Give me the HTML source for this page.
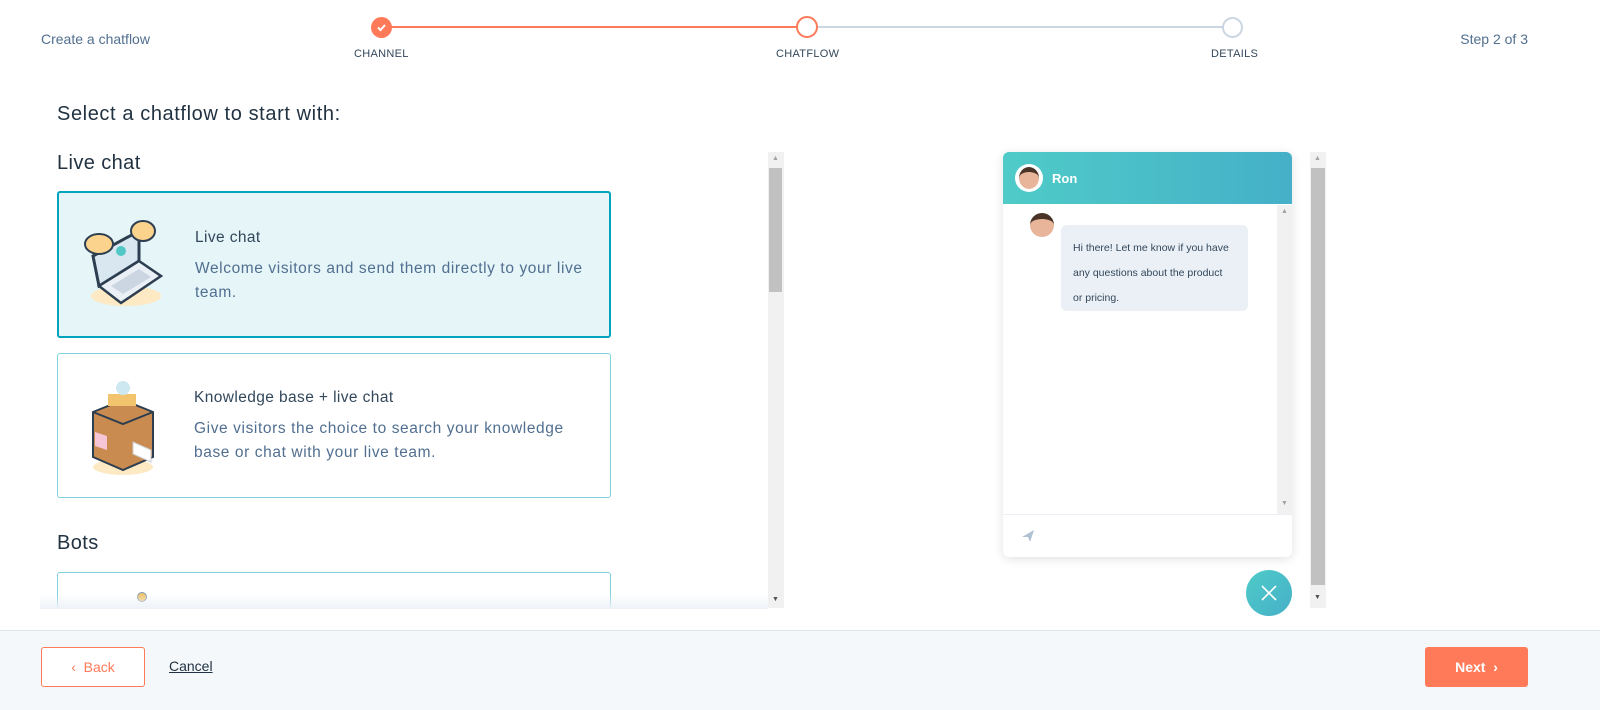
<!DOCTYPE html>
<html><head><style>
*{box-sizing:border-box;margin:0;padding:0}
body{width:1600px;height:710px;overflow:hidden;background:#fff;font-family:"Liberation Sans",sans-serif;color:#33475b;position:relative}
.a{position:absolute}
.lbl{font-size:11px;color:#33475b;letter-spacing:.3px}
.card{position:absolute;left:57px;width:554px;border-radius:3px}
.t{font-size:15.5px;color:#33475b;position:absolute;left:136px;letter-spacing:.4px}
.d{font-size:15.5px;color:#516f90;position:absolute;left:136px;width:400px;line-height:24px;letter-spacing:.6px}
</style></head><body>
<div class="a" style="left:41px;top:31px;font-size:14px;color:#516f90">Create a chatflow</div>
<div class="a" style="right:72px;top:31px;font-size:14px;color:#516f90">Step 2 of 3</div>
<div class="a" style="left:381px;top:26px;width:426px;height:2px;background:#ff7a59"></div>
<div class="a" style="left:807px;top:26px;width:425px;height:2px;background:#cbd6e2"></div>
<div class="a" style="left:371px;top:17px;width:21px;height:21px;border-radius:50%;background:#ff7a59"></div>
<svg class="a" style="left:375px;top:21px" width="13" height="13" viewBox="0 0 13 13"><path d="M3 6.5l2.5 2.5 4.5-5" stroke="#fff" stroke-width="2" fill="none"/></svg>
<div class="a" style="left:796px;top:16px;width:22px;height:22px;border-radius:50%;background:#fff;border:2px solid #ff7a59"></div>
<div class="a" style="left:1222px;top:17px;width:21px;height:21px;border-radius:50%;background:#fff;border:2px solid #cbd6e2"></div>
<div class="a lbl" style="left:354px;top:48px">CHANNEL</div>
<div class="a lbl" style="left:776px;top:48px">CHATFLOW</div>
<div class="a lbl" style="left:1211px;top:48px">DETAILS</div>

<div class="a" style="left:57px;top:103px;font-size:20px;letter-spacing:.6px;color:#213343">Select a chatflow to start with:</div>
<div class="a" style="left:57px;top:152px;font-size:20px;letter-spacing:.4px;color:#213343">Live chat</div>
<div class="card" style="top:191px;height:147px;background:#e5f5f8;border:2px solid #00a4bd">
<svg class="a" style="left:22px;top:18px" width="86" height="110" viewBox="0 0 86 110"><ellipse cx="45" cy="85" rx="35" ry="10" fill="#fdeac4"/><path d="M12 45 L58 20 L58 50 L18 75Z" fill="#d9e8f0" stroke="#2d3e50" stroke-width="3"/><path d="M18 75 L58 50 L80 65 L40 92Z" fill="#eaf0f6" stroke="#2d3e50" stroke-width="2.5"/><path d="M30 75 L58 58 L70 66 L42 83Z" fill="#cbd6e2"/><circle cx="40" cy="40" r="5" fill="#51c8c6"/><ellipse cx="18" cy="33" rx="14" ry="10" fill="#fbd38d" stroke="#2d3e50" stroke-width="2"/><ellipse cx="62" cy="20" rx="12" ry="10" fill="#fbd38d" stroke="#2d3e50" stroke-width="2"/></svg>
<div class="t" style="top:36px">Live chat</div>
<div class="d" style="top:64px">Welcome visitors and send them directly to your live team.</div>
</div>
<div class="card" style="top:353px;height:145px;background:#fff;border:1px solid #7fd1de">
<svg class="a" style="left:25px;top:18px" width="90" height="110" viewBox="0 0 90 110"><ellipse cx="40" cy="95" rx="30" ry="8" fill="#fdeac4"/><path d="M10 40 L40 28 L70 40 L70 85 L40 98 L10 85Z" fill="#c98b4f" stroke="#2d3e50" stroke-width="2"/><path d="M10 40 L40 52 L70 40" stroke="#2d3e50" stroke-width="2" fill="none"/><rect x="25" y="22" width="28" height="12" fill="#f2c46d"/><circle cx="40" cy="16" r="7" fill="#cde8f0"/><path d="M12 60l12 4v14l-12-4z" fill="#f7c6d6"/><path d="M50 70l18 8v12l-18-8z" fill="#fff" stroke="#ccc"/></svg>
<div class="t" style="top:35px">Knowledge base + live chat</div>
<div class="d" style="top:63px">Give visitors the choice to search your knowledge base or chat with your live team.</div>
</div>
<div class="a" style="left:57px;top:532px;font-size:20px;letter-spacing:.4px;color:#213343">Bots</div>
<div class="card" style="top:572px;height:60px;background:#fff;border:1px solid #7fd1de"></div>
<div class="a" style="left:137px;top:592px;width:10px;height:10px;border-radius:50%;background:#f2c46d;border:1px solid #7c98b6"></div>
<div class="a" style="left:40px;top:594px;width:728px;height:15px;background:linear-gradient(rgba(255,255,255,0),#eef2f7)"></div>
<div class="a" style="left:0;top:609px;width:1600px;height:21px;background:#fff"></div>
<div class="a" style="left:768px;top:152px;width:16px;height:456px;background:#f1f1f1"></div>
<div class="a" style="left:769px;top:168px;width:13px;height:124px;background:#c1c1c1"></div>
<div class="a" style="left:772px;top:155px;font-size:7px;color:#a3a3a3">▲</div>
<div class="a" style="left:772px;top:596px;font-size:7px;color:#505050">▼</div>

<div class="a" style="left:1003px;top:152px;width:289px;height:405px;background:#fff;border-radius:6px;box-shadow:0 2px 10px rgba(0,0,0,.12);overflow:hidden">
<div style="height:52px;background:linear-gradient(90deg,#4fcbc8,#45b0c8)"></div>
<div class="a" style="left:12px;top:12px;width:28px;height:28px;border-radius:50%;background:#fff"></div>
<div class="a" style="left:16px;top:15px;width:20px;height:22px;border-radius:50%;background:#e8b49a;border-top:5px solid #4a3428"></div>
<div class="a" style="left:49px;top:19px;color:#fff;font-weight:bold;font-size:13px">Ron</div>
<div class="a" style="left:274px;top:53px;width:15px;height:309px;background:#f1f1f1"></div>
<div class="a" style="left:278px;top:56px;font-size:7px;color:#a3a3a3">▲</div>
<div class="a" style="left:278px;top:348px;font-size:7px;color:#a3a3a3">▼</div>
<div class="a" style="left:27px;top:61px;width:24px;height:24px;border-radius:50%;background:#e8b49a;border-top:6px solid #4a3428"></div>
<div class="a" style="left:58px;top:73px;width:187px;height:86px;background:#eaf0f6;border-radius:6px;padding:11px 16px 0 12px;font-size:10.5px;line-height:25px;color:#33475b">Hi there! Let me know if you have any questions about the product or pricing.</div>
<div class="a" style="left:0;top:362px;width:289px;height:1px;background:#eaf0f6"></div>
<svg class="a" style="left:18px;top:377px" width="14" height="14" viewBox="0 0 14 14"><path d="M1 8L13 1 9 13 7 8z" fill="#b0c1d4"/></svg>
</div>
<div class="a" style="left:1246px;top:570px;width:46px;height:46px;border-radius:50%;background:linear-gradient(135deg,#4fcbc8,#45b0c8)"></div>
<svg class="a" style="left:1260px;top:584px" width="18" height="18" viewBox="0 0 18 18"><path d="M2 2L16 16M16 2L2 16" stroke="#fff" stroke-width="1.6"/></svg>
<div class="a" style="left:1310px;top:152px;width:16px;height:456px;background:#f1f1f1"></div>
<div class="a" style="left:1311px;top:168px;width:14px;height:417px;background:#c1c1c1"></div>
<div class="a" style="left:1314px;top:155px;font-size:7px;color:#a3a3a3">▲</div>
<div class="a" style="left:1314px;top:594px;font-size:7px;color:#505050">▼</div>

<div class="a" style="left:0;top:630px;width:1600px;height:80px;background:#f5f8fa;border-top:1px solid #dfe3eb"></div>
<div class="a" style="left:41px;top:647px;width:104px;height:40px;border:1px solid #ff7a59;border-radius:3px;background:#fff;color:#ff7a59;font-size:14px;text-align:center;line-height:38px">‹&nbsp; Back</div>
<div class="a" style="left:169px;top:658px;font-size:14px;color:#213343;text-decoration:underline">Cancel</div>
<div class="a" style="left:1425px;top:647px;width:103px;height:40px;background:#ff7a59;border-radius:3px;color:#fff;font-size:14px;font-weight:bold;text-align:center;line-height:40px">Next&nbsp; ›</div>
</body></html>
